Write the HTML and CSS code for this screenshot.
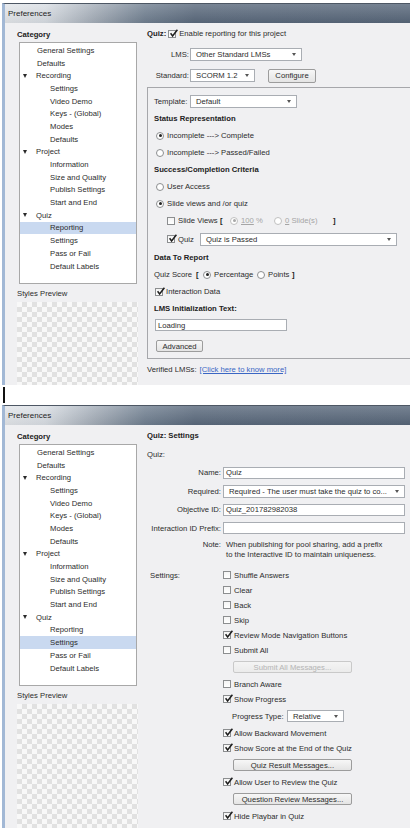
FILE: index.html
```html
<!DOCTYPE html>
<html>
<head>
<meta charset="utf-8">
<title>Preferences</title>
<link rel="stylesheet" href="styles.css">
</head>
<body>
<div class="top-gap"></div>

<section class="window win-a">
  <div class="titlebar">Preferences</div>
  <div class="win-body">
    <aside class="sidebar">
      <div class="cat-title">Category</div>
      <ul class="tree">
        <li class="lvl1">General Settings</li>
        <li class="lvl1">Defaults</li>
        <li class="grp"><span class="tri"></span>Recording</li>
        <li class="lvl2">Settings</li>
        <li class="lvl2">Video Demo</li>
        <li class="lvl2">Keys - (Global)</li>
        <li class="lvl2">Modes</li>
        <li class="lvl2">Defaults</li>
        <li class="grp"><span class="tri"></span>Project</li>
        <li class="lvl2">Information</li>
        <li class="lvl2">Size and Quality</li>
        <li class="lvl2">Publish Settings</li>
        <li class="lvl2">Start and End</li>
        <li class="grp"><span class="tri"></span>Quiz</li>
        <li class="lvl2 sel-item">Reporting</li>
        <li class="lvl2">Settings</li>
        <li class="lvl2">Pass or Fail</li>
        <li class="lvl2">Default Labels</li>
      </ul>
      <div class="preview-label">Styles Preview</div>
      <div class="preview"></div>
    </aside>

    <main class="panel panel-a">
      <div class="row">
        <b class="strong quiz-lbl">Quiz:</b>
        <span class="cb on"><svg viewBox="0 0 9 9"><path d="M1.6 4.3 3.6 7 8.4 0.8"/></svg></span>
        <span>Enable reporting for this project</span>
      </div>
      <div class="row mt4">
        <span class="lbl">LMS:</span>
        <span class="sel sel-lms">Other Standard LMSs<i class="arr"></i></span>
      </div>
      <div class="row mt4">
        <span class="lbl">Standard:</span>
        <span class="sel sel-std">SCORM 1.2<i class="arr"></i></span>
        <span class="btn btn-config">Configure</span>
      </div>

      <div class="box">
        <div class="row">
          <span class="lbl-tpl">Template:</span>
          <span class="sel sel-tpl">Default<i class="arr"></i></span>
        </div>
        <div class="row strong">Status Representation</div>
        <div class="row opt"><span class="rb on"></span>Incomplete ---&gt; Complete</div>
        <div class="row opt"><span class="rb"></span>Incomplete ---&gt; Passed/Failed</div>
        <div class="row strong">Success/Completion Criteria</div>
        <div class="row opt"><span class="rb"></span>User Access</div>
        <div class="row opt"><span class="rb on"></span>Slide views and /or quiz</div>
        <div class="row sub">
          <span class="cb"></span>
          <span class="sv-text">Slide Views</span>
          <span class="brk sv-brk">[</span>
          <span class="sv-pct"><span class="rb on dis"></span><span class="dim"><u>100</u> %</span></span>
          <span class="sv-num"><span class="rb dis"></span><span class="dim"><u>0</u> Slide(s)</span></span>
          <span class="brk">]</span>
        </div>
        <div class="row sub tall">
          <span class="cb on"><svg viewBox="0 0 9 9"><path d="M1.6 4.3 3.6 7 8.4 0.8"/></svg></span>
          <span class="qz-text">Quiz</span>
          <span class="sel sel-quiz">Quiz is Passed<i class="arr"></i></span>
        </div>
        <div class="row strong">Data To Report</div>
        <div class="row">
          <span class="qs-text">Quiz Score</span>
          <span class="brk qs-brk">[</span>
          <span class="qs-pct"><span class="rb on"></span>Percentage</span>
          <span class="qs-pts"><span class="rb"></span>Points</span>
          <span class="brk">]</span>
        </div>
        <div class="row chk"><span class="cb on"><svg viewBox="0 0 9 9"><path d="M1.6 4.3 3.6 7 8.4 0.8"/></svg></span>Interaction Data</div>
        <div class="row strong">LMS Initialization Text:</div>
        <div class="row short"><span class="input in-loading">Loading</span></div>
        <div class="row short mt5"><span class="btn btn-adv">Advanced</span></div>
      </div>

      <div class="row verified">Verified LMSs:<a class="link">[Click here to know more]</a></div>
    </main>
  </div>
</section>

<div class="between"><div class="edge-bar"></div></div>

<section class="window win-b">
  <div class="titlebar">Preferences</div>
  <div class="win-body">
    <aside class="sidebar">
      <div class="cat-title">Category</div>
      <ul class="tree">
        <li class="lvl1">General Settings</li>
        <li class="lvl1">Defaults</li>
        <li class="grp"><span class="tri"></span>Recording</li>
        <li class="lvl2">Settings</li>
        <li class="lvl2">Video Demo</li>
        <li class="lvl2">Keys - (Global)</li>
        <li class="lvl2">Modes</li>
        <li class="lvl2">Defaults</li>
        <li class="grp"><span class="tri"></span>Project</li>
        <li class="lvl2">Information</li>
        <li class="lvl2">Size and Quality</li>
        <li class="lvl2">Publish Settings</li>
        <li class="lvl2">Start and End</li>
        <li class="grp"><span class="tri"></span>Quiz</li>
        <li class="lvl2">Reporting</li>
        <li class="lvl2 sel-item">Settings</li>
        <li class="lvl2">Pass or Fail</li>
        <li class="lvl2">Default Labels</li>
      </ul>
      <div class="preview-label">Styles Preview</div>
      <div class="preview"></div>
    </aside>

    <main class="panel panel-b">
      <div class="form">
        <div class="full strong">Quiz: Settings</div>
        <div class="full">Quiz:</div>
        <span class="flbl">Name:</span>
        <span class="input fin">Quiz</span>
        <span class="flbl">Required:</span>
        <span class="sel fin">Required - The user must take the quiz to co...<i class="arr"></i></span>
        <span class="flbl">Objective ID:</span>
        <span class="input fin">Quiz_201782982038</span>
        <span class="flbl">Interaction ID Prefix:</span>
        <span class="input fin"></span>
        <span class="flbl note-lbl">Note:</span>
        <span class="note">When publishing for pool sharing, add a prefix<br>to the Interactive ID to maintain uniqueness.</span>
      </div>

      <div class="settings">
        <span class="set-lbl">Settings:</span>
        <div class="set-list">
          <div class="srow"><span class="cb"></span>Shuffle Answers</div>
          <div class="srow"><span class="cb"></span>Clear</div>
          <div class="srow"><span class="cb"></span>Back</div>
          <div class="srow"><span class="cb"></span>Skip</div>
          <div class="srow"><span class="cb on"><svg viewBox="0 0 9 9"><path d="M1.6 4.3 3.6 7 8.4 0.8"/></svg></span>Review Mode Navigation Buttons</div>
          <div class="srow"><span class="cb"></span>Submit All</div>
          <div class="brow"><span class="btn wide disabled">Submit All Messages...</span></div>
          <div class="srow"><span class="cb"></span>Branch Aware</div>
          <div class="srow"><span class="cb on"><svg viewBox="0 0 9 9"><path d="M1.6 4.3 3.6 7 8.4 0.8"/></svg></span>Show Progress</div>
          <div class="prow"><span class="pt-lbl">Progress Type:</span><span class="sel sel-pt">Relative<i class="arr"></i></span></div>
          <div class="srow"><span class="cb on"><svg viewBox="0 0 9 9"><path d="M1.6 4.3 3.6 7 8.4 0.8"/></svg></span>Allow Backward Movement</div>
          <div class="srow"><span class="cb on"><svg viewBox="0 0 9 9"><path d="M1.6 4.3 3.6 7 8.4 0.8"/></svg></span>Show Score at the End of the Quiz</div>
          <div class="brow"><span class="btn wide">Quiz Result Messages...</span></div>
          <div class="srow"><span class="cb on"><svg viewBox="0 0 9 9"><path d="M1.6 4.3 3.6 7 8.4 0.8"/></svg></span>Allow User to Review the Quiz</div>
          <div class="brow"><span class="btn wide">Question Review Messages...</span></div>
          <div class="srow"><span class="cb on"><svg viewBox="0 0 9 9"><path d="M1.6 4.3 3.6 7 8.4 0.8"/></svg></span>Hide Playbar in Quiz</div>
        </div>
      </div>
    </main>
  </div>
</section>
</body>
</html>
```

FILE: styles.css
```css
* { box-sizing: border-box; }

html, body { margin: 0; padding: 0; }

body {
  width: 410px;
  height: 828px;
  overflow: hidden;
  background: #ffffff;
  font-family: "Liberation Sans", Arial, sans-serif;
  font-size: 7.7px;
  color: #2c2c2c;
}

.top-gap { height: 3px; }

/* ---------- window frame ---------- */
.window {
  margin-left: 2px;
  border-left: 3px solid #a2b8d5;
  border-top: 1px solid #4d5764;
  background: #f0f0f2;
  overflow: hidden;
}
.win-a { height: 382px; }
.win-b { height: 425px; }

.titlebar {
  height: 19px;
  padding: 4px 0 0 3px;
  line-height: 12px;
  font-size: 8px;
  color: #1e1e1e;
  background:
    linear-gradient(rgba(255,255,255,0.18), rgba(0,0,0,0.06)),
    linear-gradient(to right, #e3e6ea 0px, #d9dee4 40px, #a4adb8 90px, #718091 140px, #5b6a7d 190px, #58677a 100%);
}

.win-body { display: flex; height: 100%; }

.between { height: 18px; }
.edge-bar { margin: 2px 0 0 3px; width: 2px; height: 16px; background: #111; }

/* ---------- sidebar ---------- */
.sidebar {
  flex: none;
  width: 135px;
  padding: 6px 0 0 12px;
}
.cat-title { font-weight: bold; line-height: 12px; color: #222; }

.tree {
  list-style: none;
  margin: 1px 0 0 2px;
  padding: 1px 0 11px;
  width: 118px;
  background: #ffffff;
  border: 1px solid #a8a8a8;
}
.tree li {
  display: flex;
  align-items: center;
  height: 12.7px;
  white-space: nowrap;
}
.tree .lvl1 { padding-left: 17px; }
.tree .lvl2 { padding-left: 30px; }
.tree .grp { padding-left: 3px; }
.tree .sel-item { background: #c9d9f0; }

.tri {
  width: 0;
  height: 0;
  margin-right: 9px;
  border-left: 2.5px solid transparent;
  border-right: 2.5px solid transparent;
  border-top: 4px solid #2a2a2a;
}

.preview-label { margin-top: 4px; line-height: 12px; }
.preview {
  margin-top: 2px;
  width: 121px;
  height: 220px;
  background-color: #f8f8f8;
  background-image: conic-gradient(#e1e1e1 25%, transparent 0 50%, #e1e1e1 0 75%, transparent 0);
  background-size: 10px 10px;
}

/* ---------- panel ---------- */
.panel {
  flex: 1;
  min-width: 0;
  padding: 2px 5px 0 7px;
}

.row {
  display: flex;
  align-items: center;
  height: 17px;
  white-space: nowrap;
}
.row.tall { height: 20px; }
.row.short { height: 16px; }
.mt4 { margin-top: 4px; }
.mt5 { margin-top: 5px; }

.strong { font-weight: bold; color: #222; }
.quiz-lbl { margin-right: 2px; }

.lbl { width: 42px; text-align: right; margin-right: 1px; }
.lbl-tpl { width: 34px; margin-right: 2px; }

/* check boxes / radios */
.cb {
  flex: none;
  position: relative;
  width: 8px;
  height: 8px;
  margin-right: 3px;
  border: 1px solid #8c8e90;
  background: linear-gradient(#f4f4f4, #ffffff);
}
.cb svg {
  position: absolute;
  left: 0;
  top: -2px;
  width: 9px;
  height: 9px;
  overflow: visible;
}
.cb svg path { fill: none; stroke: #1e1e1e; stroke-width: 1.5; }

.rb {
  flex: none;
  position: relative;
  width: 8px;
  height: 8px;
  margin-right: 3px;
  border: 1px solid #8c8e90;
  border-radius: 50%;
  background: #ffffff;
}
.rb.on::after {
  content: "";
  position: absolute;
  left: 1.5px;
  top: 1.5px;
  width: 3px;
  height: 3px;
  border-radius: 50%;
  background: #222;
}
.rb.dis { border-color: #c0c0c0; }
.rb.dis.on::after { background: #a8a8a8; }
.dim { color: #a5a5a5; }

/* selects, inputs, buttons */
.sel, .input {
  position: relative;
  display: flex;
  align-items: center;
  height: 13px;
  padding-left: 5px;
  background: #ffffff;
  border: 1px solid #a9adb3;
  overflow: hidden;
  white-space: nowrap;
}
.input { padding-left: 2px; height: 12px; }
.arr {
  position: absolute;
  right: 5px;
  top: 50%;
  margin-top: -1.5px;
  width: 0;
  height: 0;
  border-left: 2.5px solid transparent;
  border-right: 2.5px solid transparent;
  border-top: 3px solid #555;
}
.sel-lms { width: 112px; }
.sel-std { width: 65px; }
.sel-tpl { width: 107px; }
.sel-quiz { width: 197px; }
.sel-pt { width: 57px; height: 12px; }

.btn {
  display: flex;
  align-items: center;
  justify-content: center;
  height: 14px;
  border: 1px solid #9c9c9c;
  border-radius: 2px;
  background: linear-gradient(#f7f7f7, #e4e4e4);
}
.btn-config { width: 48px; margin-left: 13px; }
.btn-adv { width: 47px; height: 12px; margin-left: 2px; }

/* reporting box */
.box {
  margin: 3px -12px 0 0;
  padding: 5px 0 4px 6px;
  border: 1px solid #a6a7ab;
}
.opt { padding-left: 2px; }
.sub { padding-left: 13px; }
.chk { padding-left: 1px; }
.sv-text { width: 41px; }
.sv-brk { width: 11px; padding-left: 1px; }
.sv-pct { display: flex; align-items: center; width: 44px; }
.sv-num { display: flex; align-items: center; width: 59px; }
.brk { font-weight: bold; color: #222; }
.qz-text { width: 22px; }
.qs-text { width: 42px; }
.qs-brk { width: 7px; }
.qs-pct { display: flex; align-items: center; width: 54px; }
.qs-pts { display: flex; align-items: center; width: 35px; }
.in-loading { width: 132px; margin-left: 1px; }

.verified { margin-top: 2px; }
.link {
  margin-left: 3px;
  color: #3a66c4;
  text-decoration: underline;
}

/* ---------- quiz settings form ---------- */
.form {
  display: grid;
  grid-template-columns: 76px 1fr;
  grid-template-rows: repeat(6, 17px) 24px;
  row-gap: 1.5px;
  align-items: center;
}
.full { grid-column: 1 / 3; }
.flbl { text-align: right; padding-right: 2px; white-space: nowrap; }
.fin { width: 100%; }
.note-lbl { align-self: start; padding-top: 2px; line-height: 10px; }
.note { align-self: start; padding: 2px 0 0 3px; line-height: 10px; white-space: nowrap; }

.settings {
  display: grid;
  grid-template-columns: 76px 1fr;
  margin-top: 5.5px;
}
.set-lbl { padding-left: 3px; line-height: 15px; }
.srow {
  display: flex;
  align-items: center;
  height: 15px;
  white-space: nowrap;
}
.brow, .prow {
  display: flex;
  align-items: center;
  height: 19px;
  white-space: nowrap;
}
.btn.wide { width: 119px; height: 12px; margin-left: 10px; }
.btn.disabled { color: #b5b5b5; border-color: #c9c9c9; background: linear-gradient(#f4f4f4, #ebebeb); }
.pt-lbl { margin-left: 9px; width: 55px; }
```
